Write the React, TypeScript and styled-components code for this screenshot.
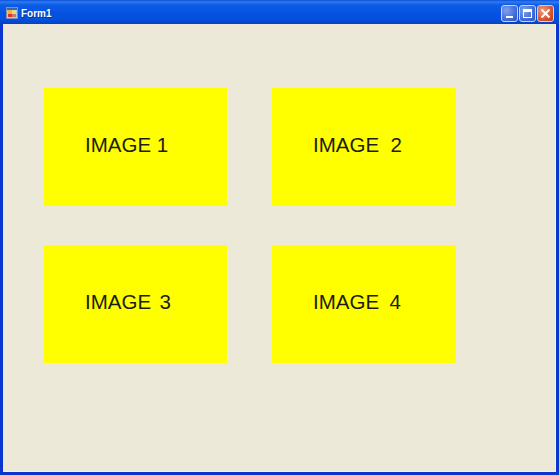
import styled, { createGlobalStyle } from "styled-components";

const GlobalStyle = createGlobalStyle`
  html, body {
    margin: 0;
    padding: 0;
    background: #0831d9;
  }
`;

const Window = styled.div`
  width: 559px;
  height: 475px;
  display: flex;
  flex-direction: column;
  box-sizing: border-box;
  overflow: hidden;
  background: #0a35d0;
  font-family: "Liberation Sans", Arial, sans-serif;
`;

const TitleBar = styled.div`
  height: 24px;
  flex: none;
  display: flex;
  align-items: center;
  padding: 2px 5px 0 6px;
  box-sizing: border-box;
  background: linear-gradient(
    180deg,
    #0a4fd8 0%,
    #2f7cf0 8%,
    #0d5ce8 20%,
    #0552e0 55%,
    #0550dc 80%,
    #0640c4 100%
  );
`;

const AppIcon = styled.svg`
  width: 12px;
  height: 12px;
  flex: none;
`;

const Title = styled.span`
  margin-left: 3px;
  color: #fff;
  font-size: 10px;
  font-weight: 700;
  text-shadow: 1px 1px 0 #0a2f9c;
  flex: 1;
`;

const Controls = styled.div`
  display: flex;
  gap: 1px;
`;

const Control = styled.div<{ $close?: boolean }>`
  width: 17px;
  height: 17px;
  box-sizing: border-box;
  border: 1px solid #c4d2f4;
  border-radius: 3px;
  display: flex;
  align-items: center;
  justify-content: center;
  background: ${(p) =>
    p.$close
      ? "radial-gradient(circle at 30% 30%, #eb9a7c, #d5512c 65%, #c03a1a)"
      : "radial-gradient(circle at 30% 30%, #7fa2ee, #3f68d8 65%, #2f56c8)"};
`;

const ControlGlyph = styled.svg`
  width: 15px;
  height: 15px;
  flex: none;
`;

const Frame = styled.div`
  flex: 1;
  margin: 0 3px 3px;
  background: #ece9d8;
  padding: 64px 0 0 41px;
  box-sizing: border-box;
  box-shadow: inset -1px -1px 0 #f6f3ea;
`;

const Grid = styled.div`
  display: grid;
  grid-template-columns: 183px 184px;
  grid-auto-rows: 118px;
  column-gap: 45px;
  row-gap: 39px;
`;

const ImageCard = styled.div<{ $wordSpacing: number }>`
  background: #ffff00;
  display: flex;
  align-items: center;
  padding: 0 0 4px 41px;
  box-sizing: border-box;
  color: #1c1c14;
  font-size: 20.5px;
  white-space: pre;
  word-spacing: ${(p) => p.$wordSpacing}px;
`;

const cards = [
  { label: "IMAGE 1", wordSpacing: 0 },
  { label: "IMAGE  2", wordSpacing: 0 },
  { label: "IMAGE  3", wordSpacing: -1.5 },
  { label: "IMAGE  4", wordSpacing: -0.5 },
];

export default function App() {
  return (
    <>
      <GlobalStyle />
      <Window>
        <TitleBar>
          <AppIcon viewBox="0 0 12 12">
            <rect x="0.5" y="0.5" width="11" height="11" fill="#b9c6e0" stroke="#7f90b8" />
            <rect x="1" y="1" width="10" height="2" fill="#3a62c4" />
            <rect x="2" y="3" width="4" height="4" fill="#f2b430" />
            <rect x="6" y="3" width="4" height="4" fill="#e8d880" />
            <rect x="2" y="7" width="4" height="3" fill="#d8382c" />
            <rect x="6" y="7" width="4" height="3" fill="#c8786c" />
          </AppIcon>
          <Title>Form1</Title>
          <Controls>
            <Control>
              <ControlGlyph viewBox="0 0 15 15">
                <rect x="4" y="10" width="7" height="2" fill="#fff" />
              </ControlGlyph>
            </Control>
            <Control>
              <ControlGlyph viewBox="0 0 15 15">
                <path d="M3 3h9v9H3z M4 6v5h7V6z" fill="#fff" fillRule="evenodd" />
              </ControlGlyph>
            </Control>
            <Control $close>
              <ControlGlyph viewBox="0 0 15 15">
                <path d="M3.5 3.5l8 8M11.5 3.5l-8 8" stroke="#fff" strokeWidth="2" />
              </ControlGlyph>
            </Control>
          </Controls>
        </TitleBar>
        <Frame>
          <Grid>
            {cards.map((card) => (
              <ImageCard key={card.label} $wordSpacing={card.wordSpacing}>
                {card.label}
              </ImageCard>
            ))}
          </Grid>
        </Frame>
      </Window>
    </>
  );
}
